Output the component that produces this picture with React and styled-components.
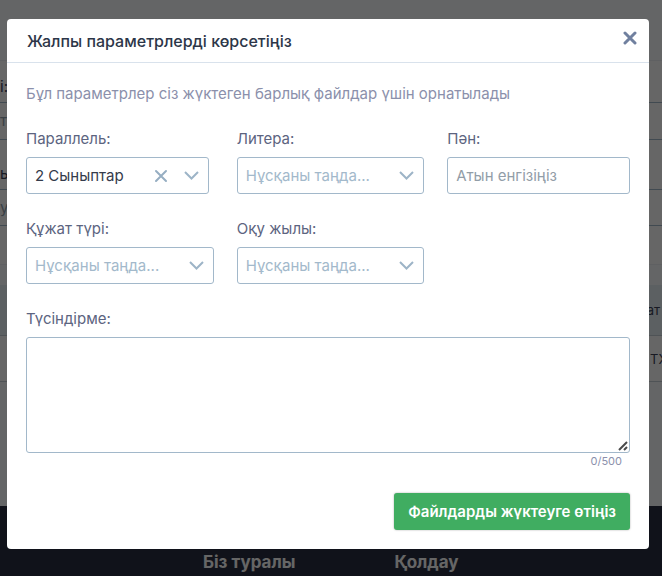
import React, { useState } from "react";
import styled, { createGlobalStyle } from "styled-components";

const GlobalStyle = createGlobalStyle`
  *, *::before, *::after { box-sizing: border-box; }
  html, body, #root { height: 100%; }
  body {
    margin: 0;
    overflow: hidden;
    background: #fafcff;
    color: #2c3648;
    font-family: Inter, "Noto Sans", sans-serif;
    font-size: 15px;
    line-height: 22px;
  }
  button, input, select, textarea { font: inherit; }
`;

const Page = styled.div`
  display: flex;
  flex-direction: column;
  min-height: 100%;
`;

const Band = styled.div`
  display: flex;
  align-items: ${(p) => (p.$low ? "flex-end" : "center")};
  justify-content: ${(p) => (p.$end ? "flex-end" : "flex-start")};
  white-space: nowrap;
  height: ${(p) => p.$height}px;
  padding-right: 2px;
  padding-bottom: ${(p) => (p.$low ? 4 : 0)}px;
  background: ${(p) => p.$fill || "#ffffff"};
  color: ${(p) => (p.$muted ? "#8fa0ad" : "#3c4257")};
  font-size: ${(p) => (p.$end ? 13 : 15)}px;
  border-bottom: 1px solid ${(p) => p.$line || "transparent"};
`;

const EdgeCell = styled.span`
  width: 10px;
`;

const Footer = styled.footer`
  display: flex;
  gap: 99px;
  margin-top: auto;
  padding: 44px 0 2px 203px;
  background: #282f43;
  color: #ffffff;
  font-size: 17px;
  font-weight: 700;
  line-height: 24px;
`;

const Backdrop = styled.div`
  position: fixed;
  inset: 0;
  padding: 19px 13px 0 7px;
  background: rgba(0, 0, 0, 0.6);
`;

const Dialog = styled.section`
  background: #ffffff;
  border-radius: 4px;
`;

const DialogHeader = styled.header`
  display: flex;
  align-items: center;
  justify-content: space-between;
  height: 44px;
  padding: 0 12px 0 20px;
  border-bottom: 1px solid #d9e2ec;
`;

const Title = styled.h2`
  margin: 0;
  font-size: 16px;
  font-weight: 500;
`;

const IconButton = styled.button`
  display: flex;
  padding: 0;
  border: 0;
  background: none;
  color: ${(p) => p.$color};
  cursor: pointer;
`;

const CloseButton = styled(IconButton)`
  margin-bottom: 5px;
`;

const Form = styled.form`
  padding: 20px 19px 19px;
`;

const Hint = styled.p`
  margin: 0 0 23px;
  color: #8b90ab;
`;

const Grid = styled.div`
  display: grid;
  grid-template-columns: repeat(3, minmax(0, 1fr));
  gap: 24px 28px;
  margin-bottom: 24px;
`;

const Field = styled.div`
  display: flex;
  flex-direction: column;
  gap: 7px;
`;

const Label = styled.label`
  color: #5c6480;
`;

const SelectBox = styled.div`
  display: grid;
  grid-template-columns: 1fr auto auto;
  align-items: center;
  min-width: ${(p) => p.$minWidth || 0}px;
  height: 37px;
  padding-right: 9px;
  border: 1px solid #a2b8ca;
  border-radius: 3px;
  color: #9db4c7;
`;

const Select = styled.select`
  grid-area: 1 / 1 / 2 / 4;
  width: 100%;
  height: 35px;
  padding: 0 36px 0 8px;
  border: 0;
  background: none;
  color: ${(p) => (p.$filled ? "#343b4b" : "#a3b9cb")};
  appearance: none;
`;

const ClearButton = styled(IconButton)`
  grid-area: 1 / 2;
  z-index: 1;
  margin-right: 16px;
`;

const ArrowIcon = styled.svg`
  grid-area: 1 / 3;
  pointer-events: none;
`;

const TextInput = styled.input`
  width: 100%;
  height: 37px;
  padding: 0 8px;
  border: 1px solid #a2b8ca;
  border-radius: 3px;
  color: #343b4b;
  &::placeholder { color: #929da8; opacity: 1; }
`;

const TextBox = styled.div`
  display: grid;
`;

const TextArea = styled.textarea`
  grid-area: 1 / 1;
  display: block;
  width: 100%;
  height: 116px;
  padding: 8px;
  border: 1px solid #a2b8ca;
  border-radius: 3px;
  resize: vertical;
  &::-webkit-resizer { background: transparent; }
`;

const Grip = styled.svg`
  grid-area: 1 / 1;
  place-self: end;
  margin: 0 2px 2px 0;
  pointer-events: none;
`;

const Counter = styled.div`
  padding-right: 8px;
  color: #8b90ab;
  font-size: 11px;
  line-height: 16px;
  text-align: right;
`;

const Actions = styled.div`
  display: flex;
  justify-content: flex-end;
  margin-top: 24px;
`;

const SubmitButton = styled.button`
  height: 37px;
  padding: 0 14px;
  border: 0;
  border-radius: 3px;
  background: #40ad61;
  box-shadow: 0 0 2px rgba(0, 0, 0, 0.35);
  color: #ffffff;
  font-weight: 600;
  cursor: pointer;
`;

function Cross({ size, width }) {
  return (
    <svg width={size} height={size} viewBox="0 0 14 14" fill="none" stroke="currentColor" strokeWidth={width} aria-hidden="true">
      <path d="M2 2 12 12M12 2 2 12" strokeLinecap="round" />
    </svg>
  );
}

function SelectField({ id, label, initial = "", options = [], minWidth }) {
  const [value, setValue] = useState(initial);
  return (
    <Field>
      <Label htmlFor={id}>{label}</Label>
      <SelectBox $minWidth={minWidth}>
        <Select id={id} value={value} $filled={value !== ""} onChange={(e) => setValue(e.target.value)}>
          <option value="">Нұсқаны таңда...</option>
          {options.map((o) => <option key={o} value={o}>{o}</option>)}
        </Select>
        {value !== "" && (
          <ClearButton type="button" $color="#96aec2" aria-label="×" onClick={() => setValue("")}>
            <Cross size={14} width={2} />
          </ClearButton>
        )}
        <ArrowIcon width="15" height="10" viewBox="0 0 15 10" fill="none" stroke="currentColor" strokeWidth="2" aria-hidden="true">
          <path d="M1 1 7.5 7.5 14 1" />
        </ArrowIcon>
      </SelectBox>
    </Field>
  );
}

export default function App() {
  const [note, setNote] = useState("");
  return (
    <>
      <GlobalStyle />
      <Page>
        <Band $height={61} $fill="#fafcff" $line="#edf0f4" />
        <Band $height={42} $line="#a2b8ca" $low><span>і:</span></Band>
        <Band $height={37} $line="#a2b8ca" $muted><span>т</span></Band>
        <Band $height={50} $line="#a2b8ca" $low><span>ы</span></Band>
        <Band $height={36} $line="#a2b8ca" $muted><span>у</span></Band>
        <Band $height={39} $line="#edf0f4" />
        <Band $height={20} $fill="#fafcff" />
        <Band $height={51} $fill="#e6f0f5" $line="#c6d0d8" $end><span>ат</span></Band>
        <Band $height={46} $line="#c6d0d8" $end><EdgeCell>ТХ</EdgeCell></Band>
        <Footer>
          <span>Біз туралы</span>
          <span>Қолдау</span>
        </Footer>
      </Page>
      <Backdrop>
        <Dialog role="dialog" aria-modal="true" aria-labelledby="dialog-title">
          <DialogHeader>
            <Title id="dialog-title">Жалпы параметрлерді көрсетіңіз</Title>
            <CloseButton type="button" $color="#70809f" aria-label="×">
              <Cross size={14} width={3} />
            </CloseButton>
          </DialogHeader>
          <Form onSubmit={(e) => e.preventDefault()}>
            <Hint>Бұл параметрлер сіз жүктеген барлық файлдар үшін орнатылады</Hint>
            <Grid>
              <SelectField id="parallel" label="Параллель:" initial="2 Сыныптар" options={["2 Сыныптар"]} />
              <SelectField id="letter" label="Литера:" minWidth={187} />
              <Field>
                <Label htmlFor="subject">Пән:</Label>
                <TextInput id="subject" placeholder="Атын енгізіңіз" />
              </Field>
              <SelectField id="doctype" label="Құжат түрі:" minWidth={188} />
              <SelectField id="year" label="Оқу жылы:" minWidth={187} />
            </Grid>
            <Field>
              <Label htmlFor="note">Түсіндірме:</Label>
              <TextBox>
                <TextArea id="note" maxLength={500} value={note} onChange={(e) => setNote(e.target.value)} />
                <Grip width="10" height="10" viewBox="0 0 10 10" stroke="#4a4a4a" strokeWidth="2" aria-hidden="true">
                  <path d="M1 9 9 1M6 9 9 6" />
                </Grip>
              </TextBox>
            </Field>
            <Counter>{note.length}/500</Counter>
            <Actions>
              <SubmitButton type="submit">Файлдарды жүктеуге өтіңіз</SubmitButton>
            </Actions>
          </Form>
        </Dialog>
      </Backdrop>
    </>
  );
}
